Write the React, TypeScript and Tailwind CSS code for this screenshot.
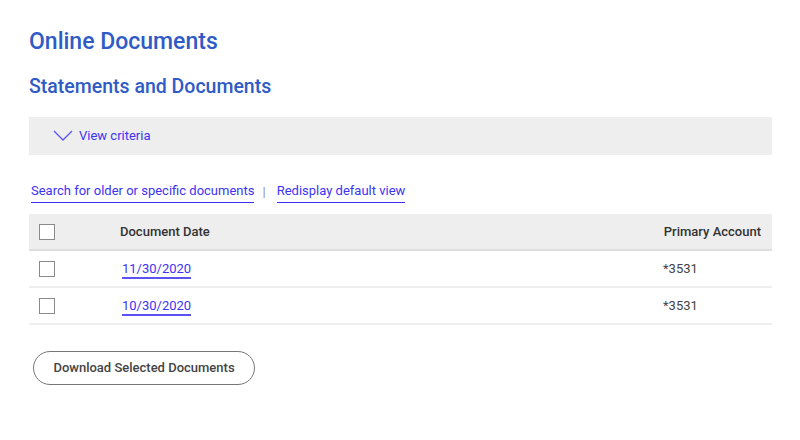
import React from 'react';

const rows = [
  { date: '11/30/2020', account: '*3531' },
  { date: '10/30/2020', account: '*3531' },
];

const Box = () => <span className="block w-4 h-4 border-[1.5px] border-[#8a8a8a] bg-white" />;

const App: React.FC = () => {
  return (
    <div className="w-[800px] h-[440px] bg-white px-[29px] pt-[28px] font-['Roboto',sans-serif]">
      <h1 className="text-[23px] leading-[28px] font-medium text-[#2e5bc6]">Online Documents</h1>
      <h2 className="mt-[18px] text-[19.5px] leading-[26px] font-medium text-[#2e5bc6]">Statements and Documents</h2>

      <div className="mt-[17px] w-[743px] h-[38px] bg-[#eeeeee] flex items-center pl-[24px] pb-[1px]">
        <svg width="20" height="12" viewBox="0 0 20 12" className="mr-[6px]">
          <path d="M1 1 L10 10 L19 1" fill="none" stroke="#5a55f0" strokeWidth="1.3" />
        </svg>
        <span className="text-[13px] text-[#3d33f5]">View criteria</span>
      </div>

      <div className="mt-[26px] flex items-center text-[13px] leading-[20px] text-[#3d33f5] pl-[2px]">
        <a className="border-b border-[#3d33f5] pb-[1px]">Search for older or specific documents</a>
        <span className="ml-[8px] mr-[11px] text-[#8a8fb0]">|</span>
        <a className="border-b border-[#3d33f5] pb-[1px]">Redisplay default view</a>
      </div>

      <div className="mt-[11px] w-[743px]">
        <div className="h-[37px] bg-[#eeeeee] border-b-2 border-[#dddddd] flex items-center text-[13px] font-medium text-[#333]">
          <div className="w-[91px] pl-[10px]">
            <Box />
          </div>
          <div className="flex-1">Document Date</div>
          <div className="pr-[11px]">Primary Account</div>
        </div>
        {rows.map((r) => (
          <div key={r.date} className="h-[37px] border-b-2 border-[#eeeeee] flex items-center text-[13px]">
            <div className="w-[93px] pl-[10px]">
              <Box />
            </div>
            <div className="flex-1">
              <a className="text-[#3d33f5] border-b-2 border-[#5b52f5] leading-[17px] inline-block">{r.date}</a>
            </div>
            <div className="w-[109px] text-[#444]">{r.account}</div>
          </div>
        ))}
      </div>

      <button className="mt-[26px] ml-[4px] h-[34px] w-[222px] rounded-full border border-[#777] text-[13px] font-medium text-[#444] bg-white">
        Download Selected Documents
      </button>
    </div>
  );
};

export default App;
